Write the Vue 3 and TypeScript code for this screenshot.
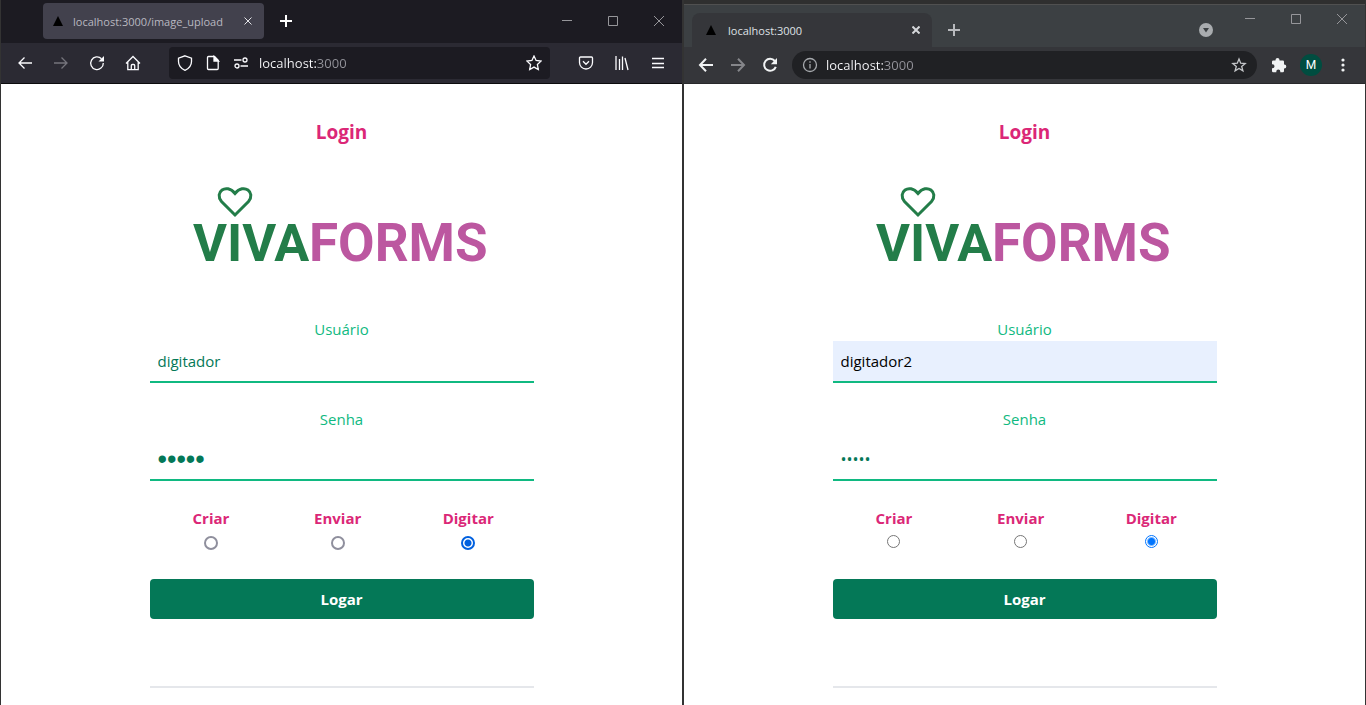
<script setup lang="ts">
import { reactive } from 'vue'

type Kind = 'fox' | 'chrome'

interface BrowserWindow {
  kind: Kind
  title: string
  address: string
  user: string
  password: string
  mode: string
}

const windows = reactive<BrowserWindow[]>([
  { kind: 'fox', title: 'localhost:3000/image_upload', address: 'localhost:3000', user: 'digitador', password: '12345', mode: 'Digitar' },
  { kind: 'chrome', title: 'localhost:3000', address: 'localhost:3000', user: 'digitador2', password: '12345', mode: 'Digitar' },
])

const modes: string[] = ['Criar', 'Enviar', 'Digitar']
</script>

<template>
  <div class="desktop">
    <section v-for="w in windows" :key="w.kind" class="window" :class="w.kind">
      <header>
        <div class="tabstrip">
          <div class="tab">
            <svg class="favicon" width="12" height="12" viewBox="0 0 12 12"><path d="M6 1 11 11H1z" fill="#000" /></svg>
            <span class="tab-title">{{ w.title }}</span>
            <button class="tab-close" aria-label="Fechar aba">
              <svg width="8" height="8" viewBox="0 0 8 8"><path d="M0.5 0.5 7.5 7.5M7.5 0.5 0.5 7.5" /></svg>
            </button>
          </div>
          <button class="new-tab" aria-label="Nova aba">
            <svg width="12" height="12" viewBox="0 0 12 12"><path d="M6 0V12M0 6H12" /></svg>
          </button>
          <span class="spacer"></span>
          <button v-if="w.kind === 'chrome'" class="tab-search" aria-label="Pesquisar abas">
            <svg width="14" height="14" viewBox="0 0 14 14"><circle cx="7" cy="7" r="7" fill="#a9acaf" /><path d="M4 5h6L7 9.5z" fill="#3c4043" /></svg>
          </button>
          <div class="controls">
            <button aria-label="Minimizar"><svg width="10" height="10" viewBox="0 0 10 10"><path d="M0 4.5H10" /></svg></button>
            <button aria-label="Maximizar"><svg width="10" height="10" viewBox="0 0 10 10"><path d="M.5 .5H9.5V9.5H.5z" /></svg></button>
            <button aria-label="Fechar"><svg width="10" height="10" viewBox="0 0 10 10"><path d="M0 0 10 10M10 0 0 10" /></svg></button>
          </div>
        </div>

        <nav v-if="w.kind === 'fox'" class="toolbar">
          <button aria-label="Voltar"><svg class="line" viewBox="0 0 16 16"><path d="M15 8H2M7.5 2.5 2 8l5.500 5.500" /></svg></button>
          <button class="dim" aria-label="Avançar"><svg class="line" viewBox="0 0 16 16"><path d="M1 8H14M8.500 2.500 14 8l-5.500 5.500" /></svg></button>
          <button aria-label="Recarregar"><svg class="line" viewBox="0 0 16 16"><path d="M12.500 3.800A6.300 6.300 0 1 0 14.300 8" /><path d="M15 1v5.500H9.500z" fill="currentColor" stroke="none" /></svg></button>
          <button aria-label="Início"><svg class="line" viewBox="0 0 16 16"><path d="M1 8.500 8 1.500l7 7M2.800 7v7.700h10.400V7M6.300 14.500V10.500a1 1 0 0 1 1-1h1.400a1 1 0 0 1 1 1v4" /></svg></button>
          <div class="address">
            <button aria-label="Proteção"><svg class="line" viewBox="0 0 16 16"><path d="M8 .8 14.500 3.200V6.500C14.500 10.500 12 13.500 8 15.300 4 13.500 1.500 10.500 1.500 6.500V3.200z" /></svg></button>
            <button aria-label="Informações do site"><svg class="line" viewBox="0 0 16 16"><path d="M3.500 1.500H9.500L13.200 5.200V13.500a1 1 0 0 1-1 1H3.500a1 1 0 0 1-1-1V2.500a1 1 0 0 1 1-1z" /><path d="M9 1.500V6h4.500z" fill="currentColor" /></svg></button>
            <button aria-label="Permissões"><svg class="line" viewBox="0 0 16 16"><path d="M1 5H8.500M7.500 11H15" /><circle cx="12" cy="5" r="2" /><circle cx="4" cy="11" r="2" /></svg></button>
            <input v-model="w.address" type="text" aria-label="Endereço" />
            <button class="star" aria-label="Favoritar"><svg class="line" viewBox="0 0 16 16"><path d="M8 1l2.100 4.500 4.900.6-3.600 3.400.9 5L8 12.100 3.700 14.500l.9-5L1 6.100l4.900-.6z" /></svg></button>
          </div>
          <button aria-label="Pocket"><svg class="line" viewBox="0 0 16 16"><path d="M2.500 2h11a1 1 0 0 1 1 1v4.500a6.500 6.500 0 0 1-13 0V3a1 1 0 0 1 1-1zM5 6.300l3 3 3-3" /></svg></button>
          <button aria-label="Biblioteca"><svg class="line" viewBox="0 0 16 16"><path d="M2 1V15M5.500 4V15M8.500 1.500V15M11 3l3 12" /></svg></button>
          <button aria-label="Menu"><svg class="line" viewBox="0 0 16 16"><path d="M2 3.500H14M2 8.500H14M2 12.500H14" /></svg></button>
        </nav>

        <nav v-else class="toolbar">
          <button aria-label="Voltar"><svg class="bold" viewBox="0 0 16 16"><path d="M15 8H2.500M8 1.800 2 8l6 6.200" /></svg></button>
          <button class="dim" aria-label="Avançar"><svg class="bold" viewBox="0 0 16 16"><path d="M1 8H13.500M8 1.800 14 8l-6 6.200" /></svg></button>
          <button aria-label="Recarregar"><svg class="bold" viewBox="0 0 16 16"><path d="M12.800 4A6 6 0 1 0 13.800 9.800" /><path d="M15 1v6.200H8.800z" fill="currentColor" stroke="none" /></svg></button>
          <div class="address">
            <button aria-label="Informações do site"><svg class="line info" viewBox="0 0 16 16"><circle cx="8" cy="8" r="6.500" /><path d="M8 7v4.500M8 4.300v1.500" /></svg></button>
            <input v-model="w.address" type="text" aria-label="Endereço" />
            <button class="star" aria-label="Favoritar"><svg class="line" viewBox="0 0 16 16"><path d="M8 2l1.700 4.200 4.500.3-3.500 2.900 1.200 4.400L8 11.400l-3.900 2.400 1.200-4.400L1.800 6.500l4.500-.3z" /></svg></button>
          </div>
          <button aria-label="Extensões"><svg viewBox="0 0 16 16"><path d="M6.500 1a2 2 0 0 1 2 2v.5h3.300a1.200 1.200 0 0 1 1.200 1.200V7.500h.3a2 2 0 0 1 0 4H13V14a1.200 1.200 0 0 1-1.200 1.200H9.300v-.7a2 2 0 0 0-4 0v.7H2.200A1.200 1.200 0 0 1 1 14v-2.800h.5a2 2 0 0 0 0-4H1V4.700a1.200 1.200 0 0 1 1.200-1.200h2.300V3a2 2 0 0 1 2-2z" fill="currentColor" /></svg></button>
          <button aria-label="Perfil"><span class="avatar">M</span></button>
          <button aria-label="Menu"><svg viewBox="0 0 16 16" fill="currentColor"><circle cx="8" cy="3" r="1.600" /><circle cx="8" cy="8" r="1.600" /><circle cx="8" cy="13" r="1.600" /></svg></button>
        </nav>
      </header>

      <main>
        <h1>Login</h1>
        <svg class="logo" viewBox="0 0 300 96" role="img" aria-label="VIVAFORMS">
          <path d="M43 31 29.500 17.500C22 8.500 34 -1.500 43 9.500 52 -1.500 64 8.500 56.500 17.500z" fill="none" stroke="#237d49" stroke-width="3" />
          <text class="viva" x="1" y="77" fill="#237d49">VIVA</text>
          <text class="forms" x="117" y="77" fill="#bc57a0">FORMS</text>
        </svg>
        <form @submit.prevent>
          <label class="caption" :for="w.kind + '-user'">Usuário</label>
          <input :id="w.kind + '-user'" v-model="w.user" class="field user" type="text" />
          <label class="caption second" :for="w.kind + '-pass'">Senha</label>
          <input :id="w.kind + '-pass'" v-model="w.password" class="field pass" type="password" />
          <div class="modes">
            <label v-for="m in modes" :key="m">
              {{ m }}
              <input v-model="w.mode" type="radio" :name="w.kind + '-mode'" :value="m" />
            </label>
          </div>
          <button class="submit" type="submit">Logar</button>
        </form>
        <hr />
      </main>
    </section>
  </div>
</template>

<style>
body {
  margin: 0;
  background: #fff;
}
</style>

<style scoped>
* {
  box-sizing: border-box;
}
.desktop {
  display: grid;
  grid-template-columns: 1fr 1fr;
  min-height: 100vh;
  font-family: "Open Sans", "Noto Sans", sans-serif;
}
.window {
  min-width: 0;
  border: solid #333;
  border-width: 0 1px;
  background: #fff;
}
button {
  display: flex;
  align-items: center;
  justify-content: center;
  padding: 0;
  border: 0;
  background: none;
  color: inherit;
  font: inherit;
  flex: none;
}
svg {
  display: block;
}
header {
  height: 84px;
  display: flex;
  flex-direction: column;
  border-bottom: 1px solid #0c0c0d;
}
.fox header {
  background: #2b2a33;
  color: #fbfbfe;
}
.chrome header {
  background: #35363a;
  color: #f1f3f4;
  border-bottom-color: #28292b;
}
.tabstrip {
  display: flex;
  align-items: flex-start;
}
.fox .tabstrip {
  height: 43px;
  padding-left: 42px;
  background: #1c1b22;
}
.chrome .tabstrip {
  height: 47px;
  padding-left: 8px;
  border-top: 4px solid #2f2f2f;
  background: #3c4043;
  box-shadow: inset 0 1px #505050;
}
.tab {
  display: flex;
  align-items: center;
  font-size: 11px;
}
.fox .tab {
  width: 221px;
  height: 36px;
  margin-top: 3px;
  padding: 0 6px 0 9px;
  border-radius: 4px;
  background: #42414d;
  color: #b9b8c0;
}
.chrome .tab {
  width: 240px;
  height: 34px;
  margin-top: 9px;
  padding: 0 6px 0 13px;
  border-radius: 8px 8px 0 0;
  background: #35363a;
  color: #dfe1e5;
}
.favicon {
  flex: none;
  margin-right: 9px;
}
.chrome .favicon {
  margin-right: 11px;
}
.tab-title {
  flex: 1;
  min-width: 0;
  overflow: hidden;
  white-space: nowrap;
}
.tab-close {
  width: 20px;
  height: 20px;
}
.tab-close path,
.new-tab path {
  stroke: #e4e4e8;
  stroke-width: 1;
}
.chrome .tab-close path {
  stroke: #d5d7da;
  stroke-width: 2;
}
.new-tab {
  width: 32px;
  height: 36px;
  margin: 3px 0 0 6px;
}
.fox .new-tab path {
  stroke: #fff;
  stroke-width: 2;
}
.chrome .new-tab {
  margin-top: 8px;
}
.chrome .new-tab path {
  stroke: #b8babd;
  stroke-width: 2;
}
.spacer {
  flex: 1;
}
.tab-search {
  width: 28px;
  height: 28px;
  margin: 12px 7px 0 0;
}
.controls {
  display: flex;
}
.controls button {
  width: 46px;
  height: 42px;
}
.chrome .controls button {
  height: 30px;
}
.controls path {
  fill: none;
  stroke: #96969a;
  stroke-width: 1;
}
.toolbar {
  flex: 1;
  display: flex;
  align-items: center;
  padding: 0 6px;
}
.toolbar button {
  width: 36px;
  height: 32px;
}
.chrome .toolbar button {
  width: 32px;
  height: 28px;
}
.toolbar svg {
  width: 16px;
  height: 16px;
}
.line,
.bold {
  fill: none;
  stroke: currentColor;
  stroke-width: 1.300;
}
.bold {
  stroke-width: 2;
}
.toolbar .dim {
  color: #75747c;
}
.chrome .toolbar .dim {
  color: #85868a;
}
.address {
  flex: 1;
  min-width: 0;
  display: flex;
  align-items: center;
}
.fox .address {
  height: 32px;
  margin: 0 18px;
  padding-left: 2px;
  border-radius: 4px;
  background: #1c1b22;
}
.chrome .address {
  height: 28px;
  margin: 0 6px;
  padding-left: 2px;
  border-radius: 14px;
  background: #202124;
}
.fox .address button {
  width: 28px;
}
.fox .address .star {
  width: 32px;
}
.chrome .address .star {
  width: 36px;
  color: #c5c7ca;
}
.info {
  color: #a6a9ad;
}
.address input {
  flex: 1;
  min-width: 0;
  padding: 0;
  border: 0;
  outline: 0;
  margin-left: 4px;
  font: 13px/20px "Open Sans", "Noto Sans", sans-serif;
  color: transparent;
  background: linear-gradient(90deg, #fbfbfe 57px, #94949b 57px) text;
}
.chrome .address input {
  margin-left: 0;
}
.avatar {
  width: 22px;
  height: 22px;
  border-radius: 50%;
  background: #004d40;
  color: #fff;
  font: 12px/22px Roboto, sans-serif;
}
main {
  width: 384px;
  max-width: 100%;
  margin: 0 auto;
  padding-top: 34px;
  text-align: center;
}
h1 {
  margin: 0;
  font-size: 19px;
  line-height: 28px;
  font-weight: 700;
  color: #db2777;
}
.logo {
  width: 300px;
  height: 96px;
  margin: 38px auto 37px;
}
.logo text {
  font: 700 53px Roboto, sans-serif;
}
.logo .viva {
  font-size: 52px;
}
.caption {
  display: block;
  font-size: 15px;
  line-height: 24px;
  font-weight: 400;
  color: #10b981;
}
.second {
  margin-top: 24px;
}
.field {
  display: block;
  width: 100%;
  height: 42px;
  padding: 0 8px;
  border: 0;
  border-bottom: 2px solid #10b981;
  border-radius: 0;
  outline: 0;
  background: transparent;
  color: #047857;
  font: 15px "Open Sans", "Noto Sans", sans-serif;
}
.chrome .user {
  background: #e8f0fe;
  color: #000;
}
.pass {
  margin-top: 8px;
}
.fox .pass {
  font-family: "Liberation Sans", sans-serif;
  font-size: 27px;
}
.chrome .pass {
  font-size: 16px;
}
.modes {
  display: grid;
  grid-template-columns: 16fr 17fr 17fr;
  height: 73px;
  margin-top: 25px;
}
.modes label {
  display: flex;
  flex-direction: column;
  align-items: center;
  font-size: 15px;
  line-height: 24px;
  font-weight: 700;
  color: #db2777;
}
.modes input {
  appearance: none;
  width: 13px;
  height: 13px;
  margin: 5px 0 0;
  border: 1px solid #767676;
  border-radius: 50%;
  background: #fff;
}
.modes input:checked {
  border-color: #0075ff;
  background: radial-gradient(circle, #0075ff 3px, #fff 5px);
}
.fox .modes input {
  width: 14px;
  height: 14px;
  margin-top: 6px;
  border: 2px solid #8f8f9d;
}
.fox .modes input:checked {
  border-color: #0060df;
  background: radial-gradient(circle, #0060df 3px, #fff 4px);
}
.submit {
  width: 100%;
  height: 40px;
  border-radius: 4px;
  background: #047857;
  color: #fff;
  font-size: 15px;
  font-weight: 700;
}
hr {
  height: 2px;
  margin: 67px 0 0;
  border: 0;
  background: #e5e7eb;
}
</style>
